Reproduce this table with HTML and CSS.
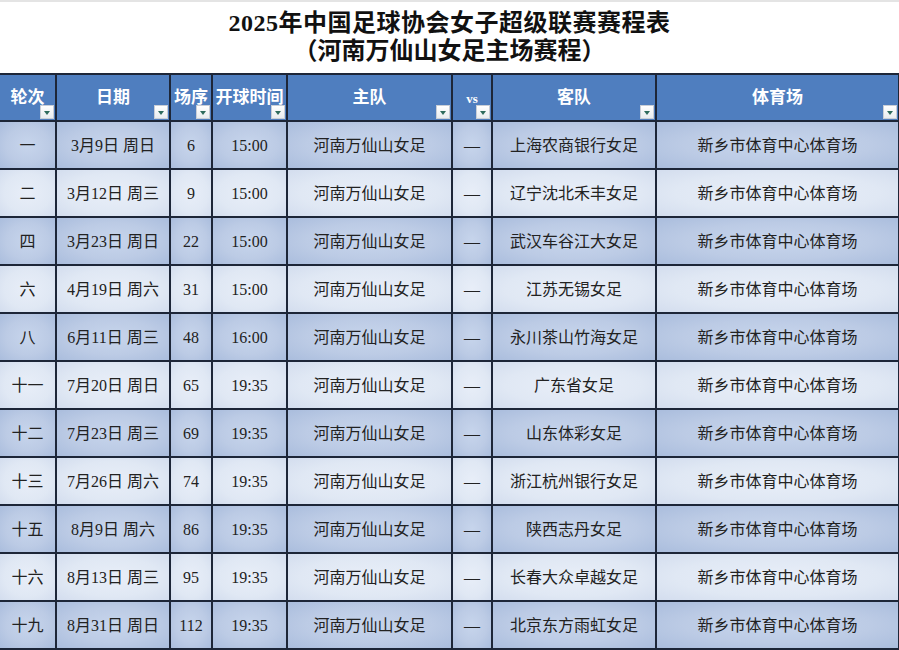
FILE: index.html
```html
<!DOCTYPE html>
<html lang="zh-CN">
<head>
<meta charset="utf-8">
<title>2025年中国足球协会女子超级联赛赛程表</title>
<link rel="stylesheet" href="styles.css">
</head>
<body>
<div class="sheet">
  <div class="title">
    <div class="t1">2025年中国足球协会女子超级联赛赛程表</div>
    <div class="t2">（河南万仙山女足主场赛程）</div>
  </div>
  <table class="grid">
    <colgroup>
      <col class="c1"><col class="c2"><col class="c3"><col class="c4"><col class="c5"><col class="c6"><col class="c7"><col class="c8">
    </colgroup>
    <thead>
      <tr>
        <th>轮次<span class="flt"></span></th>
        <th>日期<span class="flt"></span></th>
        <th>场序<span class="flt"></span></th>
        <th>开球时间<span class="flt"></span></th>
        <th>主队<span class="flt"></span></th>
        <th class="vs">vs<span class="flt"></span></th>
        <th>客队<span class="flt"></span></th>
        <th>体育场<span class="flt"></span></th>
      </tr>
    </thead>
    <tbody>
      <tr class="odd"><td>一</td><td>3月9日 周日</td><td>6</td><td>15:00</td><td>河南万仙山女足</td><td>—</td><td>上海农商银行女足</td><td>新乡市体育中心体育场</td></tr>
      <tr class="even"><td>二</td><td>3月12日 周三</td><td>9</td><td>15:00</td><td>河南万仙山女足</td><td>—</td><td>辽宁沈北禾丰女足</td><td>新乡市体育中心体育场</td></tr>
      <tr class="odd"><td>四</td><td>3月23日 周日</td><td>22</td><td>15:00</td><td>河南万仙山女足</td><td>—</td><td>武汉车谷江大女足</td><td>新乡市体育中心体育场</td></tr>
      <tr class="even"><td>六</td><td>4月19日 周六</td><td>31</td><td>15:00</td><td>河南万仙山女足</td><td>—</td><td>江苏无锡女足</td><td>新乡市体育中心体育场</td></tr>
      <tr class="odd"><td>八</td><td>6月11日 周三</td><td>48</td><td>16:00</td><td>河南万仙山女足</td><td>—</td><td>永川茶山竹海女足</td><td>新乡市体育中心体育场</td></tr>
      <tr class="even"><td>十一</td><td>7月20日 周日</td><td>65</td><td>19:35</td><td>河南万仙山女足</td><td>—</td><td>广东省女足</td><td>新乡市体育中心体育场</td></tr>
      <tr class="odd"><td>十二</td><td>7月23日 周三</td><td>69</td><td>19:35</td><td>河南万仙山女足</td><td>—</td><td>山东体彩女足</td><td>新乡市体育中心体育场</td></tr>
      <tr class="even"><td>十三</td><td>7月26日 周六</td><td>74</td><td>19:35</td><td>河南万仙山女足</td><td>—</td><td>浙江杭州银行女足</td><td>新乡市体育中心体育场</td></tr>
      <tr class="odd"><td>十五</td><td>8月9日 周六</td><td>86</td><td>19:35</td><td>河南万仙山女足</td><td>—</td><td>陕西志丹女足</td><td>新乡市体育中心体育场</td></tr>
      <tr class="even"><td>十六</td><td>8月13日 周三</td><td>95</td><td>19:35</td><td>河南万仙山女足</td><td>—</td><td>长春大众卓越女足</td><td>新乡市体育中心体育场</td></tr>
      <tr class="odd"><td>十九</td><td>8月31日 周日</td><td>112</td><td>19:35</td><td>河南万仙山女足</td><td>—</td><td>北京东方雨虹女足</td><td>新乡市体育中心体育场</td></tr>
    </tbody>
  </table>
</div>
</body>
</html>
```
FILE: styles.css
```css
html, body {
  margin: 0;
  padding: 0;
  background: #ffffff;
}
body {
  font-family: "Liberation Serif", "Noto Sans CJK SC", serif;
  color: #1b1b1b;
}
.sheet {
  width: 899px;
  border-top: 2px solid #e4e4e4;
}
.title {
  height: 71px;
  display: flex;
  flex-direction: column;
  align-items: center;
  justify-content: center;
  font-weight: bold;
  font-size: 24px;
  line-height: 28px;
  color: #111;
  padding-bottom: 1px;
  box-sizing: border-box;
}
.t1 {
  letter-spacing: 0.5px;
}
.grid {
  border-collapse: collapse;
  table-layout: fixed;
  width: 899px;
}
.c1 { width: 56px; }
.c2 { width: 114px; }
.c3 { width: 42px; }
.c4 { width: 75px; }
.c5 { width: 165px; }
.c6 { width: 40px; }
.c7 { width: 164px; }
.c8 { width: 243px; }
.grid th, .grid td {
  border: 2px solid #1d2638;
  text-align: center;
  padding: 0;
}
.grid tr > :first-child {
  border-left: none;
}
.grid th {
  position: relative;
  height: 47px;
  background: #4f7ebf;
  color: #ffffff;
  font-weight: bold;
  font-size: 17px;
  line-height: 20px;
  vertical-align: middle;
  padding-bottom: 0;
  box-sizing: border-box;
}
.grid th.vs {
  font-size: 13px;
  padding-top: 3px;
}
.flt {
  position: absolute;
  right: 1px;
  bottom: 1px;
  width: 14px;
  height: 14px;
  background: linear-gradient(#ffffff, #e9ecef);
  border: 1px solid #c9ced6;
  box-sizing: border-box;
}
.flt::after {
  content: "";
  position: absolute;
  left: 3px;
  top: 5px;
  border-left: 3.5px solid transparent;
  border-right: 3.5px solid transparent;
  border-top: 4px solid #2e6b5d;
}
.grid td {
  height: 45px;
  font-size: 16px;
  line-height: 20px;
  vertical-align: middle;
  color: #222;
  padding-top: 1px;
}
.grid tr.odd td {
  background: radial-gradient(ellipse at 50% 50%, #c7d5ec 0%, #bccbe5 55%, #aabddd 100%);
}
.grid tr.even td {
  background: radial-gradient(ellipse at 50% 50%, #e8eef8 0%, #e0e8f4 60%, #d3ddee 100%);
}
```
